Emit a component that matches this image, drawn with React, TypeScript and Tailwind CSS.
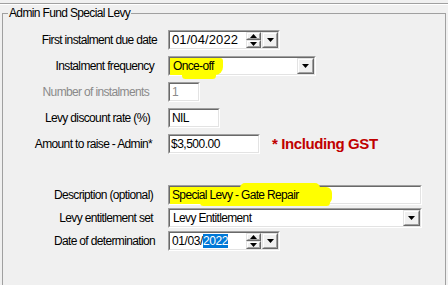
import type { ReactNode } from 'react'

function Sunken({ className = '', innerClassName = '', children }: { className?: string; innerClassName?: string; children?: ReactNode }) {
  return (
    <div className={`border border-t-[#a0a0a0] border-l-[#a0a0a0] border-b-white border-r-white ${className}`}>
      <div className={`relative h-full border border-t-[#696969] border-l-[#696969] border-b-[#e3e3e3] border-r-[#e3e3e3] ${innerClassName}`}>
        {children}
      </div>
    </div>
  )
}

function Raised({ className = '', children }: { className?: string; children?: ReactNode }) {
  return (
    <div className={`border border-t-[#e3e3e3] border-l-[#e3e3e3] border-b-[#696969] border-r-[#696969] ${className}`}>
      <div className="flex h-full items-center justify-center border border-t-white border-l-white border-b-[#a0a0a0] border-r-[#a0a0a0] bg-[#f0f0f0]">
        {children}
      </div>
    </div>
  )
}

const DownArrow = () => (
  <svg width="7" height="4" viewBox="0 0 7 4">
    <path d="M0 0h7L3.5 4z" fill="#000" />
  </svg>
)

const SpinArrow = ({ up }: { up?: boolean }) => (
  <svg width="7" height="4" viewBox="0 0 7 4">
    <path d={up ? 'M3.5 0L7 4H0z' : 'M0 0h7L3.5 4z'} fill="#000" />
  </svg>
)

function DatePicker({ children }: { children: ReactNode }) {
  return (
    <Sunken className="h-[20px] w-[112px]" innerClassName="flex bg-white">
      <div className="flex flex-1 items-center pl-[2px]">{children}</div>
      <div className="flex w-[15px] flex-col">
        <Raised className="h-1/2">
          <SpinArrow up />
        </Raised>
        <Raised className="h-1/2">
          <SpinArrow />
        </Raised>
      </div>
      <div className="w-px bg-[#f0f0f0]" />
      <Raised className="w-[16px]">
        <DownArrow />
      </Raised>
    </Sunken>
  )
}

function Row({ label, pr, muted, className = '', children }: { label: string; pr: string; muted?: boolean; className?: string; children: ReactNode }) {
  return (
    <div className={`flex h-[20px] items-center ${className}`}>
      <div className={`w-[165px] shrink-0 text-right ${pr} ${muted ? 'text-[#8a8a8a]' : 'text-black'}`}>{label}</div>
      {children}
    </div>
  )
}

export default function App() {
  return (
    <div className="h-[285px] w-[448px] overflow-hidden bg-[#f0f0f0] font-['Liberation_Sans',Arial,sans-serif] text-[12px] leading-[14px] tracking-[-0.65px]">
      <div className="mt-[3px] h-px bg-[#a0a0a0]" />
      <div className="h-px bg-white" />

      <fieldset className="ml-[2px] mt-px h-[300px] w-[444px] min-w-0 border border-[#a0a0a0]">
        <legend className="ml-[5px] px-[1px] leading-[14px]">Admin Fund Special Levy</legend>

        <Row label="First instalment due date" pr="pr-[11px]" className="mt-[10px]">
          <DatePicker>
            <span className="text-[13px] tracking-[0.1px]">01/04/2022</span>
          </DatePicker>
        </Row>

        <Row label="Instalment frequency" pr="pr-[14px]" className="mt-[6px]">
          <Sunken className="h-[20px] w-[148px]" innerClassName="flex bg-white">
            <div className="absolute left-0 top-0 h-[17px] w-[53px] rounded-br-[8px] rounded-tr-[3px] bg-[#ffff00]" />
            <div className="absolute left-[12px] top-[14px] h-[7px] w-[34px] rounded-full bg-[#ffff00]" />
            <div className="relative flex flex-1 items-center pl-[3px]">Once-off</div>
            <Raised className="w-[17px]">
              <DownArrow />
            </Raised>
          </Sunken>
        </Row>

        <Row label="Number of instalments" pr="pr-[19px]" muted className="mt-[6px]">
          <Sunken className="h-[20px] w-[32px]" innerClassName="flex items-center bg-white pl-[2px]">
            <span className="text-[#8a8a8a]">1</span>
          </Sunken>
        </Row>

        <Row label="Levy discount rate (%)" pr="pr-[18px]" className="mt-[6px]">
          <Sunken className="h-[20px] w-[52px]" innerClassName="flex items-center bg-white pl-[2px]">
            NIL
          </Sunken>
        </Row>

        <Row label="Amount to raise - Admin*" pr="pr-[16px]" className="mt-[6px]">
          <Sunken className="h-[20px] w-[92px]" innerClassName="flex items-center bg-white pl-[1px]">
            <span className="tracking-[-0.5px]">$3,500.00</span>
          </Sunken>
          <span className="ml-[12px] text-[15px] font-bold tracking-[-0.4px] text-[#c00000]">* Including GST</span>
        </Row>

        <Row label="Description (optional)" pr="pr-[15px]" className="mt-[31px]">
          <Sunken className="h-[20px] w-[254px]" innerClassName="flex items-center bg-white">
            <div className="absolute left-0 top-0 h-[17px] w-[162px] rounded-r-[6px] bg-[#ffff00]" />
            <div className="absolute left-[70px] top-[-4px] h-[10px] w-[80px] rounded-full bg-[#ffff00]" />
            <div className="absolute left-[30px] top-[12px] h-[7px] w-[130px] rounded-full bg-[#ffff00]" />
            <span className="relative pl-[2px]">Special Levy - Gate Repair</span>
          </Sunken>
        </Row>

        <Row label="Levy entitlement set" pr="pr-[15px]" className="mt-[3px]">
          <Sunken className="h-[20px] w-[254px]" innerClassName="flex bg-white">
            <div className="flex flex-1 items-center pl-[3px]">Levy Entitlement</div>
            <Raised className="w-[17px]">
              <DownArrow />
            </Raised>
          </Sunken>
        </Row>

        <Row label="Date of determination" pr="pr-[13px]" className="mt-[3px]">
          <DatePicker>
            <span className="tracking-[-0.4px]">
              01/03/<span className="bg-[#0078d7] text-white">2022</span>
            </span>
          </DatePicker>
        </Row>
      </fieldset>
    </div>
  )
}
